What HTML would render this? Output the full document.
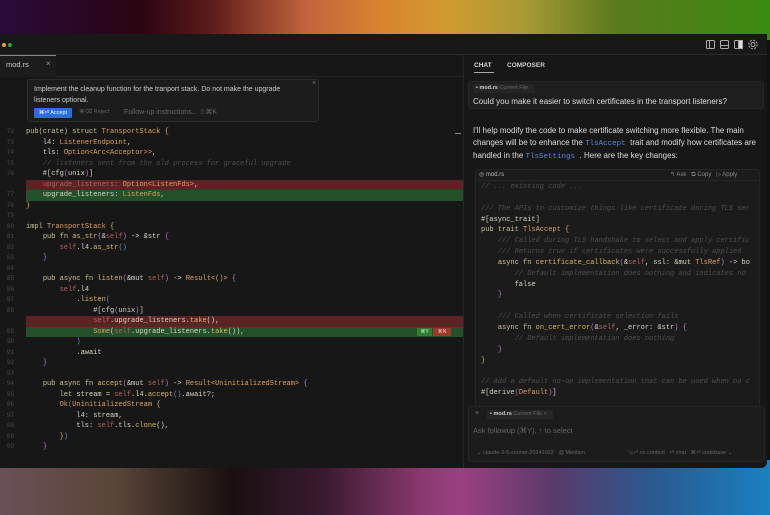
<!DOCTYPE html>
<html><head><meta charset="utf-8"><style>
*{margin:0;padding:0;box-sizing:border-box}
body{width:770px;height:515px;overflow:hidden;position:relative;font-family:"Liberation Sans",sans-serif;background:#111}
.bgt{position:absolute;left:0;top:0;width:770px;height:40px;background:linear-gradient(90deg,#2a0a3a 0%,#2a0512 18%,#5a1a1a 27%,#c4653f 40%,#d8852e 50%,#d19a30 58%,#a89a35 68%,#5a7a1e 80%,#3a8a10 100%)}
.bgb{position:absolute;left:0;top:460px;width:770px;height:55px;background:linear-gradient(90deg,#6a5058 0%,#5a4538 15%,#1a1010 30%,#3a1a30 42%,#8a3a70 55%,#9a4080 60%,#5a3a6a 72%,#2a5a90 85%,#1a80c0 100%)}
.win{position:absolute;left:0;top:34px;width:767px;height:434px;background:#171717;border-radius:0 6px 6px 0}
.top{position:absolute;left:0;top:34px;width:767px;height:21px;background:#181818;border-bottom:1px solid #2a2a2a}
.mono{font-family:"Liberation Mono",monospace;font-size:7px;white-space:pre;position:absolute;line-height:10.5px}
.ln{position:absolute;left:0;width:14px;text-align:right;font-family:"Liberation Mono",monospace;font-size:6px;color:#4a4a4a;line-height:10.5px}
.k{color:#c9c58e}.t{color:#e1a05c}.f{color:#d8d6c8}.c{color:#4e4e4e;font-style:italic}.s{color:#b8605c}.p{color:#b47bd0}.m{color:#d9b760}.b{color:#6a8ad0}
.chip{white-space:nowrap}
</style></head><body>
<div class="bgt"></div><div class="bgb"></div>
<div class="win"></div>
<div class="top"></div>
<div style="position:absolute;left:2px;top:43px;width:4px;height:4px;border-radius:50%;background:#d8a838"></div>
<div style="position:absolute;left:8px;top:43px;width:4px;height:4px;border-radius:50%;background:#3aa040"></div>
<svg style="position:absolute;left:705px;top:39px" width="60" height="12" viewBox="0 0 60 12" fill="none" stroke="#aaa" stroke-width="1">
<rect x="1.5" y="1.5" width="8" height="8" rx="1"/><line x1="4.5" y1="1.5" x2="4.5" y2="9.5"/>
<rect x="15.5" y="1.5" width="8" height="8" rx="1"/><line x1="15.5" y1="6.5" x2="23.5" y2="6.5"/>
<rect x="29.5" y="1.5" width="8" height="8" rx="1"/><rect x="33.5" y="1.5" width="4" height="8" fill="#ddd"/>
<circle cx="48" cy="5.5" r="2"/><circle cx="48" cy="5.5" r="4.2" stroke-dasharray="2 1.3"/>
</svg>
<div style="position:absolute;left:0;top:55px;width:56px;height:22px;background:#1c1c1c;border-top:1px solid #888"></div>
<div style="position:absolute;left:6px;top:60px;font-size:7.5px;color:#ccc">mod.rs</div>
<div style="position:absolute;left:46px;top:59px;font-size:8px;color:#999">×</div>
<div style="position:absolute;left:56px;top:76px;width:407px;height:1px;background:#262626"></div>
<div style="position:absolute;left:27px;top:79px;width:292px;height:43px;background:#1c1c1c;border:1px solid #2c2c2c;border-radius:3px"></div>
<div style="position:absolute;left:34px;top:85px;font-size:7px;color:#ccc;line-height:10.5px;width:262px">Implement the cleanup function for the tranport stack. Do not make the upgrade listeners optional.</div>
<div style="position:absolute;left:312px;top:80px;font-size:7px;color:#777">×</div>
<div style="position:absolute;left:34px;top:108px;width:38px;height:10px;background:#2d6ed8;border-radius:1px;font-size:5.5px;color:#fff;line-height:10px;text-align:center">⌘⏎ Accept</div>
<div style="position:absolute;left:79px;top:109px;font-size:5.5px;color:#666">⌘⌫ Reject</div>
<div style="position:absolute;left:124px;top:108px;font-size:7px;color:#666">Follow-up instructions... ⇧⌘K</div>
<div style="position:absolute;left:455px;top:133px;width:6px;height:1px;background:#888"></div>
<div style="position:absolute;left:26px;top:179.5px;width:437px;height:10.5px;background:#5a2424"></div>
<div style="position:absolute;left:26px;top:190px;width:437px;height:10.5px;background:#24502a"></div>
<div style="position:absolute;left:26px;top:316px;width:437px;height:10.5px;background:#5a2424"></div>
<div style="position:absolute;left:26px;top:326.5px;width:437px;height:10.5px;background:#24502a"></div>
<div style="position:absolute;left:417px;top:328px;width:15px;height:8px;background:#2f7a36;font-size:5px;color:#cfc;text-align:center;line-height:8px">⌘Y</div>
<div style="position:absolute;left:433px;top:328px;width:18px;height:8px;background:#9a3a28;font-size:5px;color:#fcc;text-align:center;line-height:8px">⌘N</div>
<div class="ln" style="top:127px">72<br>73<br>74<br>75<br>76<br><br>77<br>78<br>79<br>80<br>81<br>82<br>83<br>84<br>85<br>86<br>87<br>88<br><br>89<br>90<br>91<br>92<br>93<br>94<br>95<br>96<br>97<br>98<br>99<br>99</div>
<div class="mono" style="left:26px;top:127px;color:#d8d6c8"><span class="k">pub(crate) struct</span> <span class="t">TransportStack</span> <span class="m">{</span>
    <span class="f">l4:</span> <span class="t">ListenerEndpoint</span>,
    <span class="f">tls:</span> <span class="t">Option&lt;Arc&lt;Acceptor&gt;&gt;</span>,
    <span class="c">// listeners sent from the old process for graceful upgrade</span>
    #[cfg<span class="p">(</span>unix<span class="p">)</span>]
    <span class="s">upgrade_listeners: </span><span class="t">Option&lt;ListenFds&gt;</span>,
    <span class="f">upgrade_listeners:</span> <span class="t">ListenFds</span>,
<span class="m">}</span>

<span class="k">impl</span> <span class="t">TransportStack</span> <span class="m">{</span>
    <span class="k">pub fn</span> <span class="m">as_str</span><span class="p">(</span>&amp;<span class="s">self</span><span class="p">)</span> -&gt; &amp;str <span class="p">{</span>
        <span class="s">self</span>.l4.<span class="m">as_str</span><span class="b">()</span>
    <span class="p">}</span>

    <span class="k">pub async fn</span> <span class="m">listen</span><span class="p">(</span>&amp;mut <span class="s">self</span><span class="p">)</span> -&gt; <span class="t">Result&lt;()&gt;</span> <span class="p">{</span>
        <span class="s">self</span>.l4
            .<span class="m">listen</span><span class="b">(</span>
                #[cfg<span class="p">(</span>unix<span class="p">)</span>]
                <span class="s">self</span>.upgrade_listeners.<span class="m">take</span>(),
                <span class="t">Some</span>(<span class="s">self</span>.upgrade_listeners.<span class="m">take</span>()),
            <span class="b">)</span>
            .await
    <span class="p">}</span>

    <span class="k">pub async fn</span> <span class="m">accept</span><span class="p">(</span>&amp;mut <span class="s">self</span><span class="p">)</span> -&gt; <span class="t">Result&lt;UninitializedStream&gt;</span> <span class="p">{</span>
        <span class="k">let</span> stream = <span class="s">self</span>.l4.<span class="m">accept</span><span class="b">()</span>.await?;
        <span class="t">Ok</span><span class="b">(</span><span class="t">UninitializedStream</span> <span class="m">{</span>
            l4: stream,
            tls: <span class="s">self</span>.tls.<span class="m">clone</span>(),
        <span class="m">}</span><span class="b">)</span>
    <span class="p">}</span></div>
<div style="position:absolute;left:463px;top:55px;width:1px;height:413px;background:#262626"></div>
<div style="position:absolute;left:474px;top:62px;font-size:6.5px;font-weight:bold;color:#ddd">CHAT</div>
<div style="position:absolute;left:474px;top:72px;width:20px;height:1px;background:#aaa"></div>
<div style="position:absolute;left:507px;top:62px;font-size:6.5px;font-weight:bold;color:#ccc">COMPOSER</div>
<div style="position:absolute;left:468px;top:81px;width:296px;height:28px;background:#1e1e1e;border:1px solid #262626;border-radius:3px"></div>
<div class="chip" style="position:absolute;left:473px;top:84px;width:62px;height:9px;background:#262626;border-radius:2px;font-size:5.5px;color:#ccc;line-height:9px;padding-left:3px">▪ <b>mod.rs</b> <span style="color:#666">Current File</span></div>
<div style="position:absolute;left:473px;top:97px;font-size:8px;color:#ddd">Could you make it easier to switch certificates in the transport listeners?</div>
<div style="position:absolute;left:473px;top:125px;font-size:8px;color:#ddd;line-height:11.5px;width:290px">I'll help modify the code to make certificate switching more flexible. The main changes will be to enhance the <span style="font-family:'Liberation Mono',monospace;color:#5a8ad8;font-size:7.5px"> TlsAccept </span> trait and modify how certificates are handled in the <span style="font-family:'Liberation Mono',monospace;color:#5a8ad8;font-size:7.5px"> TlsSettings </span>. Here are the key changes:</div>
<div style="position:absolute;left:475px;top:169px;width:285px;height:240px;background:#1b1b1b;border:1px solid #262626;border-radius:3px"></div>
<div style="position:absolute;left:475px;top:169px;width:285px;height:12px;border-bottom:1px solid #262626"></div>
<div style="position:absolute;left:479px;top:171px;font-size:6px;color:#bbb">◎ mod.rs</div>
<div style="position:absolute;left:670px;top:171px;font-size:6px;color:#888">↰ Ask &nbsp; ⧉ Copy &nbsp; ▷ Apply</div>
<div class="mono" style="left:481px;top:182px;line-height:10.85px;color:#d8d6c8;width:278px;overflow:hidden"><span class="c">// ... existing code ...</span>

<span class="c">/// The APIs to customize things like certificate during TLS ser</span>
#[async_trait]
<span class="k">pub trait</span> <span class="t">TlsAccept</span> <span class="m">{</span>
    <span class="c">/// Called during TLS handshake to select and apply certific</span>
    <span class="c">/// Returns true if certificates were successfully applied</span>
    <span class="k">async fn</span> <span class="m">certificate_callback</span><span class="p">(</span>&amp;<span class="s">self</span>, ssl: &amp;mut <span class="t">TlsRef</span><span class="p">)</span> -&gt; bo
        <span class="c">// Default implementation does nothing and indicates no</span>
        false
    <span class="p">}</span>

    <span class="c">/// Called when certificate selection fails</span>
    <span class="k">async fn</span> <span class="m">on_cert_error</span><span class="p">(</span>&amp;<span class="s">self</span>, _error: &amp;str<span class="p">)</span> <span class="p">{</span>
        <span class="c">// Default implementation does nothing</span>
    <span class="p">}</span>
<span class="m">}</span>

<span class="c">// Add a default no-op implementation that can be used when no c</span>
#[derive<span class="p">(</span><span class="t">Default</span><span class="p">)</span>]</div>
<div style="position:absolute;left:468px;top:406px;width:297px;height:56px;background:#1c1c1c;border:1px solid #262626;border-radius:3px"></div>
<div style="position:absolute;left:475px;top:410px;font-size:7px;color:#888">+</div>
<div class="chip" style="position:absolute;left:487px;top:410px;width:66px;height:9px;background:#262626;border-radius:2px;font-size:5.5px;color:#ccc;line-height:9px;padding-left:3px">▪ <b>mod.rs</b> <span style="color:#666">Current File ×</span></div>
<div style="position:absolute;left:473px;top:426px;font-size:7.5px;color:#666">Ask followup (⌘Y), ↑ to select</div>
<div style="position:absolute;left:477px;top:450px;font-size:5.5px;color:#666;white-space:nowrap">⌄ claude-3-5-sonnet-20241022 &nbsp; @ Mention</div>
<div style="position:absolute;left:627px;top:450px;font-size:5.5px;color:#666;white-space:nowrap">⌥⏎ no context &nbsp; ⏎ chat &nbsp; ⌘⏎ codebase ⌄</div>
</body></html>
